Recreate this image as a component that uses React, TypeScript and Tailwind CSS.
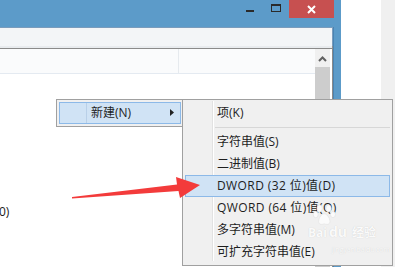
const menuFont = "font-['Open_Sans','Noto_Sans_CJK_SC',sans-serif]"

const subItems = [
  { label: '字符串值(S)' },
  { label: '二进制值(B)' },
  { label: 'DWORD (32 位)值(D)', active: true, wide: true },
  { label: 'QWORD (64 位)值(Q)', wide: true },
  { label: '多字符串值(M)' },
  { label: '可扩充字符串值(E)' },
]

export default function App() {
  return (
    <div className={`relative flex h-[267px] w-[395px] overflow-hidden bg-white ${menuFont}`}>
      <RegeditWindow />
      <div className="w-[40px] bg-white" />
      <div className="flex-1 bg-[#f0f0f0]" />

      <ContextMenu />
      <SubMenu />
      <Watermark />
      <RedArrow />
    </div>
  )
}

function RegeditWindow() {
  return (
    <div className="flex h-full w-[341px] flex-col">
      {/* title bar */}
      <div className="flex h-[27px] shrink-0 items-start justify-end bg-[#5c9bc9] pr-[7px]">
        <div className="flex h-[18px] w-[26px] items-start justify-center pt-[10px]">
          <div className="h-[2px] w-[8px] bg-[#2a2a2a]" />
        </div>
        <div className="flex h-[18px] w-[26px] items-start justify-center pt-[4px]">
          <div className="h-[8px] w-[10px] border border-t-2 border-[#2a2a2a]" />
        </div>
        <div className="flex h-[18px] w-[45px] items-center justify-center bg-[#c75050]">
          <svg width="9" height="9" viewBox="0 0 9 9">
            <path d="M1 1 L8 8 M8 1 L1 8" stroke="#fff" strokeWidth="2" />
          </svg>
        </div>
      </div>

      <div className="flex flex-1">
        <div className="flex w-[333px] flex-col">
          {/* toolbar / address strip */}
          <div className="h-[19px] border-t border-r border-[#7a9cbc] bg-[#f3f5f7]" />
          <div className="h-[2px] border-r border-[#8f8f8f] bg-[#e8ebee]" />

          {/* list pane */}
          <div className="flex flex-1 border-t border-r border-[#8a8a8a]">
            <div className="flex flex-1 flex-col">
              <div className="flex h-[25px] border-b border-[#e4eaf1] bg-[#fafbfc]">
                <div className="w-[179px] border-r border-[#e6eaee]" />
                <div className="flex-1" />
              </div>
              <div className="mt-[130px] h-[16px] -ml-[1px] text-[12px] leading-[16px] text-[#1a1a1a]">
                0)
              </div>
            </div>

            <div className="flex w-[15px] flex-col bg-[#f0f0f0] pt-[1px]">
              <div className="flex h-[17px] items-center justify-center">
                <svg width="9" height="6" viewBox="0 0 9 6">
                  <path d="M1 5 L4.5 1.5 L8 5" fill="none" stroke="#606060" strokeWidth="2" />
                </svg>
              </div>
              <div className="flex-1 bg-[#cdcdcd]" />
            </div>
            <div className="w-[2px] bg-white" />
          </div>
        </div>
        <div className="flex-1 border-l border-[#4a84b3] bg-[#5c9bc9]" />
      </div>
    </div>
  )
}

function ContextMenu() {
  return (
    <div className="absolute left-[56px] top-[99px] h-[28px] w-[128px] border border-[#a0a0a0] bg-[#f0f0f0] p-[2px]">
      <div className="relative flex h-[22px] items-center border border-[#8cb9e8] bg-[#d0e3f5] pl-[31px] text-[12px] text-[#1e1e1e]">
        <div className="absolute bottom-0 left-[26px] top-0 w-px bg-[#b9d0e8]" />
        新建(N)
        <svg className="absolute right-[6px] top-[6px]" width="4" height="7" viewBox="0 0 4 7">
          <path d="M0 0 L4 3.5 L0 7 Z" fill="#222" />
        </svg>
      </div>
    </div>
  )
}

function SubMenu() {
  return (
    <div className="absolute left-[182px] top-[99px] flex h-[167px] w-[211px] flex-col border border-[#a0a0a0] bg-[#f0f0f0] px-[2px] pt-[2px]">
      <div className="absolute bottom-[4px] left-[29px] top-[1px] w-px bg-[#e2e2e2]" />
      <div className="absolute bottom-[4px] left-[30px] top-[1px] w-px bg-white" />

      <MenuItem label="项(K)" />
      <div className="flex h-[7px] items-start pl-[30px] pt-[3px]">
        <div className="h-px flex-1 bg-[#d7d7d7]" />
      </div>
      {subItems.map((item) => (
        <MenuItem key={item.label} label={item.label} active={item.active} wide={item.wide} />
      ))}
    </div>
  )
}

function MenuItem({ label, active, wide }: { label: string; active?: boolean; wide?: boolean }) {
  return (
    <div
      className={`relative flex h-[22px] items-center border pl-[31px] text-[12px] text-[#1e1e1e] ${
        active ? 'border-[#8cb9e8] bg-[#d0e3f5]' : 'border-transparent'
      } ${wide ? 'tracking-[0.4px]' : ''}`}
    >
      {label}
    </div>
  )
}

// faint "Baidu 经验" stamp over the submenu corner
function Watermark() {
  return (
    <div className="pointer-events-none absolute left-[306px] top-[194px] h-[64px] w-[86px] text-white/90 [text-shadow:0_0_1px_rgba(0,0,0,0.18)]">
      <svg className="absolute left-[6px] top-[10px]" width="26" height="23" viewBox="0 0 28 26">
        <g fill="#fbfbfb" stroke="#e2e2e2" strokeWidth="0.8">
          <ellipse cx="8" cy="5" rx="3" ry="4" />
          <ellipse cx="18" cy="5" rx="3" ry="4" />
          <ellipse cx="3.5" cy="12" rx="2.8" ry="3.5" />
          <ellipse cx="23" cy="12" rx="2.8" ry="3.5" />
          <path d="M13 11 C9 11 6 18 7 21 C8 24 11 23 13 22.5 C15 23 18 24 19.5 21 C20.5 18 17 11 13 11 Z" />
        </g>
      </svg>
      <div className="absolute left-[2px] top-[30px] flex items-baseline whitespace-nowrap font-bold leading-[16px]">
        <span className="text-[12px]">Bai</span>
        <span className="ml-[2px] text-[14px]">du</span>
        <span className="ml-[5px] text-[12px]">经验</span>
      </div>
      <div className="absolute left-[26px] top-[51px] whitespace-nowrap text-[7px] leading-[10px] tracking-[-0.1px]">
        jingyan.baidu.com
      </div>
    </div>
  )
}

function RedArrow() {
  return (
    <svg className="pointer-events-none absolute left-0 top-0" width="395" height="267" viewBox="0 0 395 267">
      <polygon
        points="72,197 177,184.5 176,177 200,185 180,198 178.5,191 72,198.5"
        fill="#f33b3b"
      />
    </svg>
  )
}
